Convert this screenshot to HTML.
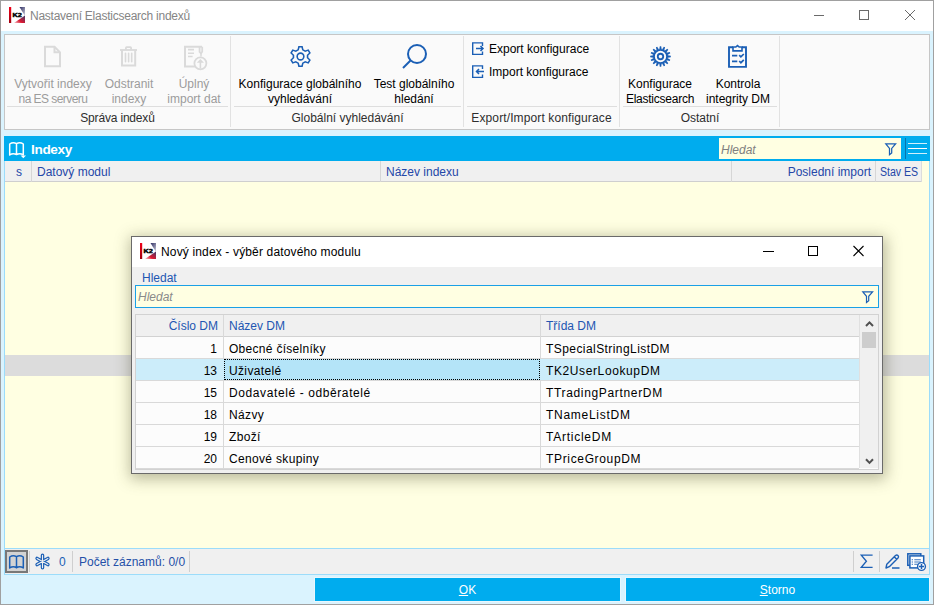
<!DOCTYPE html>
<html><head><meta charset="utf-8">
<style>
*{box-sizing:border-box;margin:0;padding:0}
html,body{width:934px;height:605px;overflow:hidden;background:#fff}
body{font-family:"Liberation Sans",sans-serif;font-size:12px;color:#000;position:relative}
.a{position:absolute}
.t{position:absolute;white-space:nowrap;line-height:15px;margin-top:1px}
.c{text-align:center}
svg{position:absolute;overflow:visible}
#win{position:absolute;left:0;top:0;width:934px;height:605px;background:#daf3fe}
#wb{position:absolute;left:0;top:0;width:934px;height:605px;border:1px solid #a0a0a0;pointer-events:none}
#title{position:absolute;left:0;top:0;width:934px;height:31px;background:#fff}
#ribbon{position:absolute;left:4px;top:34px;width:926px;height:96px;background:#fafafa;border:1px solid #c6c6c6}
.vs{position:absolute;width:1px;top:36px;height:91px;background:#e2e2e2}
.hs{position:absolute;height:1px;top:106px;background:#dedede}
.dis{color:#9c9c9c}
.lab{color:#2e2e2e}
#bar{position:absolute;left:4px;top:136px;width:926px;height:25px;background:#00acee}
#ghead{position:absolute;left:5px;top:161px;width:917px;height:21px;background:#f0f0f0;border-bottom:1px solid #cfcfcf}
#gbody{position:absolute;left:4px;top:161px;width:926px;height:388px;background:#ffffe2;border-left:1px solid #9cdcfa;border-right:1px solid #9cdcfa}
#status{position:absolute;left:4px;top:548px;width:926px;height:27px;background:#f0f0f0;border:1px solid #9cdcfa}
.btn{position:absolute;top:578px;height:23px;background:#00acee;color:#fff;text-align:center;line-height:23px;padding-top:1px;outline:1px solid #e8f7fe}
.btn u{text-underline-offset:1px}
.hd{color:#2447a8}
#dlg{position:absolute;left:131px;top:236px;width:752px;height:238px;background:#f0f0f0;border:1px solid #6a6a6a;box-shadow:1px 3px 14px 2px rgba(70,70,40,0.38)}
.dh{color:#2256b2}
.cell{position:absolute;height:22px;line-height:22px;white-space:nowrap;margin-top:1px}
</style></head><body>
<svg width="0" height="0" style="position:absolute"><defs>
<linearGradient id="kr" x1="0" y1="0" x2="0" y2="1"><stop offset="0" stop-color="#f00018"/><stop offset="1" stop-color="#a0000f"/></linearGradient>
<linearGradient id="kn" x1="0" y1="0" x2="1" y2="1"><stop offset="0" stop-color="#2a2a60"/><stop offset="0.6" stop-color="#8a8aa8"/><stop offset="1" stop-color="#d8d8e8"/></linearGradient>
<linearGradient id="kb" x1="0" y1="1" x2="1" y2="0"><stop offset="0" stop-color="#f4c0c8"/><stop offset="0.4" stop-color="#d8001a"/><stop offset="1" stop-color="#23235a"/></linearGradient>
</defs></svg>
<div id="win">
  <div id="title"></div>
  <div id="ribbon"></div>
  <div id="gbody"></div>
  <div class="a" style="left:5px;top:355px;width:924px;height:21px;background:#dcdcdc"></div>
  <div id="ghead"></div>
  <div id="bar"></div>
  <div id="status"></div>
  <div class="btn" style="left:315px;width:305px"><u>O</u>K</div>
  <div class="btn" style="left:626px;width:303px"><u>S</u>torno</div>
</div>

<!-- title bar -->
<svg style="left:9px;top:7px" width="16" height="16" viewBox="0 0 16 16">
  <rect x="0" y="0" width="16" height="16" fill="#fff"/>
  <rect x="0" y="0" width="2.2" height="16" fill="url(#kr)"/>
  <path d="M10.5 0 L16 0 L16 9 Z" fill="url(#kn)"/>
  <path d="M5 16 L16 8.5 L16 16 Z" fill="url(#kb)" opacity="0.9"/>
  <text x="8.2" y="10.1" font-size="6.2" font-weight="bold" text-anchor="middle" fill="#000" stroke="#000" stroke-width="0.45" font-family="Liberation Sans" textLength="9.4" lengthAdjust="spacingAndGlyphs">K2</text>
</svg>
<div class="t" style="left:30px;top:8px;color:#858585;letter-spacing:-0.25px">Nastavení Elasticsearch indexů</div>
<svg style="left:814px;top:15px" width="10" height="1"><rect width="10" height="1" fill="#6a6a6a"/></svg>
<svg style="left:859px;top:10px" width="10" height="10"><rect x="0.5" y="0.5" width="9" height="9" fill="none" stroke="#6a6a6a" stroke-width="1"/></svg>
<svg style="left:905px;top:10px" width="10" height="10"><path d="M0 0 L10 10 M10 0 L0 10" stroke="#6a6a6a" stroke-width="1"/></svg>

<!-- ribbon separators -->
<div class="vs" style="left:230px"></div>
<div class="vs" style="left:463px"></div>
<div class="vs" style="left:619px"></div>
<div class="vs" style="left:779px"></div>
<div class="hs" style="left:7px;width:221px"></div>
<div class="hs" style="left:234px;width:227px"></div>
<div class="hs" style="left:467px;width:150px"></div>
<div class="hs" style="left:623px;width:154px"></div>

<!-- group 1 -->
<svg style="left:44px;top:46px" width="18" height="22" viewBox="0 0 18 22">
  <path d="M1 0.8 H10.5 L16 6.3 V20.2 H1 Z" fill="none" stroke="#dadada" stroke-width="2"/>
  <path d="M10.5 0.8 V6.3 H16" fill="none" stroke="#dadada" stroke-width="2"/>
</svg>
<svg style="left:119px;top:45px" width="19" height="23" viewBox="0 0 19 23">
  <path d="M1 5 H18" stroke="#dadada" stroke-width="1.8"/>
  <path d="M6.9 4.5 V3 Q6.9 2.2 7.7 2.2 H11.3 Q12.1 2.2 12.1 3 V4.5" fill="none" stroke="#dadada" stroke-width="1.8"/>
  <path d="M3 5 V20.6 H16.2 V5" fill="none" stroke="#dadada" stroke-width="2"/>
  <path d="M6.5 8.3 V16.8 M9.6 8.3 V16.8 M12.7 8.3 V16.8" stroke="#dadada" stroke-width="1.6" stroke-linecap="round"/>
</svg>
<svg style="left:183px;top:45px" width="27" height="26" viewBox="0 0 27 26">
  <path d="M14 21.4 H2 V1.7 H19" fill="none" stroke="#dadada" stroke-width="2"/>
  <path d="M16.6 1.7 V6.8 L18 8.3 L19.2 6.8 V1.7" fill="none" stroke="#dadada" stroke-width="1.8"/>
  <path d="M18 8.3 V11.5" stroke="#dadada" stroke-width="1.5"/>
  <path d="M5 4.6 H11 M5 8.2 H11 M5 11.5 H9.6" stroke="#dadada" stroke-width="1.6"/>
  <circle cx="17.4" cy="18.3" r="6" fill="#fafafa" stroke="#dadada" stroke-width="1.8"/>
  <path d="M17.4 23.6 V16.5" stroke="#dadada" stroke-width="1.6"/>
  <path d="M13.8 17.8 L17.4 14 L21 17.8 Z" fill="#dadada"/>
</svg>
<div class="t c dis" style="left:7px;top:76px;width:92px">Vytvořit indexy<br><span style="letter-spacing:-0.55px">na ES serveru</span></div>
<div class="t c dis" style="left:99px;top:76px;width:60px">Odstranit<br>indexy</div>
<div class="t c dis" style="left:161px;top:76px;width:66px">Úplný<br>import dat</div>
<div class="t c lab" style="left:7px;top:110px;width:221px;letter-spacing:-0.18px">Správa indexů</div>

<!-- group 2 -->
<svg style="left:289px;top:45px" width="23" height="23" viewBox="-0.9 -0.9 24.8 24.8">
  <path d="M9.8 1 H13.2 L14 4.3 L16.6 5.7 L19.8 4.6 L21.6 7.7 L19.1 10.2 V12.8 L21.6 15.3 L19.8 18.4 L16.6 17.3 L14 18.7 L13.2 22 H9.8 L9 18.7 L6.4 17.3 L3.2 18.4 L1.4 15.3 L3.9 12.8 V10.2 L1.4 7.7 L3.2 4.6 L6.4 5.7 L9 4.3 Z" fill="none" stroke="#1b5fb5" stroke-width="1.7" stroke-linejoin="miter"/>
  <circle cx="11.5" cy="11.5" r="3.6" fill="none" stroke="#1b5fb5" stroke-width="1.7"/>
</svg>
<svg style="left:401px;top:43px" width="28" height="27" viewBox="0 0 28 27">
  <circle cx="16" cy="11" r="9" fill="none" stroke="#1b5fb5" stroke-width="2"/>
  <path d="M9.5 17.5 L2 25" stroke="#1b5fb5" stroke-width="2"/>
</svg>
<div class="t c" style="left:233px;top:76px;width:134px">Konfigurace globálního<br>vyhledávání</div>
<div class="t c" style="left:369px;top:76px;width:90px">Test globálního<br>hledání</div>
<div class="t c lab" style="left:234px;top:110px;width:227px">Globální vyhledávání</div>

<!-- group 3 -->
<svg style="left:471px;top:42px" width="14" height="14" viewBox="0 0 14 14">
  <path d="M11.5 4 V0.9 H1.7 V12.4 H11.5 V9.5" fill="none" stroke="#1b5fb5" stroke-width="1.4"/>
  <path d="M5 6.5 H12 M9.5 4 L12 6.5 L9.5 9" fill="none" stroke="#1b5fb5" stroke-width="1.5"/>
</svg>
<svg style="left:471px;top:65px" width="14" height="14" viewBox="0 0 14 14">
  <path d="M11.5 4 V0.9 H1.7 V12.4 H11.5 V9.5" fill="none" stroke="#1b5fb5" stroke-width="1.4"/>
  <path d="M13 6.5 H5.5 M8 4 L5.5 6.5 L8 9" fill="none" stroke="#1b5fb5" stroke-width="1.5"/>
</svg>
<div class="t" style="left:489px;top:41px">Export konfigurace</div>
<div class="t" style="left:489px;top:64px">Import konfigurace</div>
<div class="t c lab" style="left:464px;top:110px;width:155px;letter-spacing:0.12px">Export/Import konfigurace</div>

<!-- group 4 -->
<svg style="left:649px;top:45px" width="23" height="23" viewBox="-11.5 -11.5 23 23">
  <circle cx="0" cy="0" r="6.6" fill="none" stroke="#1b5fb5" stroke-width="1.9"/>
  <circle cx="0" cy="0" r="2.7" fill="none" stroke="#1b5fb5" stroke-width="1.9"/>
  <g fill="#1b5fb5"><path d="M-1.2 -7 L-0.7 -10.3 H0.7 L1.2 -7 Z" transform="rotate(0.0)"/><path d="M-1.2 -7 L-0.7 -10.3 H0.7 L1.2 -7 Z" transform="rotate(22.5)"/><path d="M-1.2 -7 L-0.7 -10.3 H0.7 L1.2 -7 Z" transform="rotate(45.0)"/><path d="M-1.2 -7 L-0.7 -10.3 H0.7 L1.2 -7 Z" transform="rotate(67.5)"/><path d="M-1.2 -7 L-0.7 -10.3 H0.7 L1.2 -7 Z" transform="rotate(90.0)"/><path d="M-1.2 -7 L-0.7 -10.3 H0.7 L1.2 -7 Z" transform="rotate(112.5)"/><path d="M-1.2 -7 L-0.7 -10.3 H0.7 L1.2 -7 Z" transform="rotate(135.0)"/><path d="M-1.2 -7 L-0.7 -10.3 H0.7 L1.2 -7 Z" transform="rotate(157.5)"/><path d="M-1.2 -7 L-0.7 -10.3 H0.7 L1.2 -7 Z" transform="rotate(180.0)"/><path d="M-1.2 -7 L-0.7 -10.3 H0.7 L1.2 -7 Z" transform="rotate(202.5)"/><path d="M-1.2 -7 L-0.7 -10.3 H0.7 L1.2 -7 Z" transform="rotate(225.0)"/><path d="M-1.2 -7 L-0.7 -10.3 H0.7 L1.2 -7 Z" transform="rotate(247.5)"/><path d="M-1.2 -7 L-0.7 -10.3 H0.7 L1.2 -7 Z" transform="rotate(270.0)"/><path d="M-1.2 -7 L-0.7 -10.3 H0.7 L1.2 -7 Z" transform="rotate(292.5)"/><path d="M-1.2 -7 L-0.7 -10.3 H0.7 L1.2 -7 Z" transform="rotate(315.0)"/><path d="M-1.2 -7 L-0.7 -10.3 H0.7 L1.2 -7 Z" transform="rotate(337.5)"/></g>
</svg>
<svg style="left:727px;top:44px" width="21" height="25" viewBox="0 0 21 25">
  <path d="M6 3.2 H2 V22.9 H19 V3.2 H15" fill="none" stroke="#1b5fb5" stroke-width="1.9"/>
  <path d="M6 3 V6.9 H15 V3 H12.2 L10.5 1.6 L8.8 3 Z" fill="none" stroke="#1b5fb5" stroke-width="1.6"/>
  <path d="M5 11.6 H10.3 M5 17.4 H10.3" stroke="#1b5fb5" stroke-width="1.9"/>
  <path d="M12.2 11.2 L13.9 12.9 L16.8 10 M12.2 17 L13.9 18.7 L16.8 15.8" fill="none" stroke="#1b5fb5" stroke-width="1.7"/>
</svg>
<div class="t c" style="left:623px;top:76px;width:74px">Konfigurace<br><span style="letter-spacing:-0.25px">Elasticsearch</span></div>
<div class="t c" style="left:699px;top:76px;width:78px">Kontrola<br>integrity DM</div>
<div class="t c lab" style="left:623px;top:110px;width:154px">Ostatní</div>

<!-- Indexy bar -->
<svg style="left:8px;top:141px" width="18" height="18" viewBox="0 0 18 18">
  <path d="M1.7 3 Q5 0.6 8.5 2.6 Q12 0.6 15.3 3 V14 Q12 11.6 8.5 13.6 Q5 11.6 1.7 14 Z M8.5 2.6 V14" fill="none" stroke="#fff" stroke-width="1.5" stroke-linejoin="round"/>
  <path d="M12.6 14.4 H18 L15.3 17.2 Z" fill="#fff"/>
</svg>
<div class="t" style="left:31px;top:141px;color:#fff;font-weight:bold;font-size:13.6px;letter-spacing:-0.35px">Indexy</div>
<div class="a" style="left:719px;top:138px;width:182px;height:21px;background:#ffffe2"></div>
<div class="t" style="left:721px;top:142px;color:#808080;font-style:italic">Hledat</div>
<svg style="left:885px;top:143px" width="12" height="13" viewBox="0 0 12 13">
  <path d="M0.8 0.8 H10.6 L6.7 5.4 V9.9 L4.5 11.7 V5.4 Z" fill="none" stroke="#1b5fb5" stroke-width="1.25" stroke-linejoin="miter"/>
</svg>
<div class="a" style="left:905px;top:138px;width:1px;height:21px;background:#0874ad"></div>
<div class="a" style="left:908px;top:143px;width:19px;height:1.4px;background:#d2f0fc"></div>
<div class="a" style="left:908px;top:148px;width:19px;height:1.4px;background:#fff"></div>
<div class="a" style="left:908px;top:153px;width:19px;height:1.4px;background:#d2f0fc"></div>

<!-- grid header -->
<div class="a" style="left:31px;top:161px;width:1px;height:21px;background:#d6d6d6"></div>
<div class="a" style="left:380px;top:161px;width:1px;height:21px;background:#d6d6d6"></div>
<div class="a" style="left:731px;top:161px;width:1px;height:21px;background:#d6d6d6"></div>
<div class="a" style="left:875px;top:161px;width:1px;height:21px;background:#d6d6d6"></div>
<div class="a" style="left:921px;top:161px;width:1px;height:21px;background:#dcdcdc"></div>
<div class="t hd" style="left:16px;top:164px">s</div>
<div class="t hd" style="left:37px;top:164px">Datový modul</div>
<div class="t hd" style="left:386px;top:164px">Název indexu</div>
<div class="t hd" style="left:731px;top:164px;width:140px;text-align:right">Poslední import</div>
<div class="t hd" style="left:880px;top:164px;display:inline-block;transform:scaleX(0.88);transform-origin:0 0">Stav ES</div>

<!-- status bar -->
<div class="a" style="left:5px;top:550px;width:23px;height:23px;background:#d3d3d3;border:2px solid #787878"></div>
<svg style="left:8px;top:554px" width="18" height="16" viewBox="0 0 18 16">
  <path d="M1.7 3 Q5 0.6 8.5 2.6 Q12 0.6 15.3 3 V14 Q12 11.6 8.5 13.6 Q5 11.6 1.7 14 Z M8.5 2.6 V14.6" fill="none" stroke="#1b5fb5" stroke-width="1.5" stroke-linejoin="round"/>
</svg>
<div class="a" style="left:29px;top:551px;width:1px;height:21px;background:#cfcfcf"></div>
<svg style="left:34px;top:553px" width="17" height="17" viewBox="0 0 17 17">
  <g transform="translate(8.5 8.5)">
  <path d="M0 -6.2 V6.2 M-5.4 -3.1 L5.4 3.1 M-5.4 3.1 L5.4 -3.1" stroke="#1b5fb5" stroke-width="3.5" stroke-linecap="round"/>
  <path d="M0 -6.2 V6.2 M-5.4 -3.1 L5.4 3.1 M-5.4 3.1 L5.4 -3.1" stroke="#f0f0f0" stroke-width="1.1" stroke-linecap="round"/>
  </g>
</svg>
<div class="t" style="left:59px;top:554px;color:#1b5fb5">0</div>
<div class="a" style="left:72px;top:551px;width:1px;height:21px;background:#cfcfcf"></div>
<div class="t" style="left:79px;top:554px;color:#2550a8">Počet záznamů: 0/0</div>
<div class="a" style="left:189px;top:551px;width:1px;height:21px;background:#cfcfcf"></div>
<div class="a" style="left:853px;top:551px;width:1px;height:21px;background:#cfcfcf"></div>
<svg style="left:859px;top:554px" width="15" height="15" viewBox="0 0 15 15">
  <path d="M13.6 1.1 H2.3 L7.4 7.2 L2.3 13.3 H13.6" fill="none" stroke="#1b5fb5" stroke-width="1.35"/>
</svg>
<div class="a" style="left:879px;top:551px;width:1px;height:21px;background:#cfcfcf"></div>
<svg style="left:885px;top:554px" width="16" height="15" viewBox="0 0 16 15">
  <path d="M1 14 L1.8 10.2 L10.5 1.5 Q11.8 0.4 13 1.5 Q14.1 2.7 13 4 L4.3 12.7 Z M9.2 2.8 L11.7 5.3" fill="none" stroke="#1b5fb5" stroke-width="1.4" stroke-linejoin="round"/>
  <path d="M7 14 H14.5" stroke="#1b5fb5" stroke-width="1.5"/>
</svg>
<svg style="left:907px;top:553px" width="20" height="18" viewBox="0 0 20 18">
  <rect x="0.8" y="0.8" width="13" height="11.5" fill="none" stroke="#1b5fb5" stroke-width="1.5"/>
  <rect x="2.9" y="2.9" width="13.8" height="12" fill="#fff" stroke="#1b5fb5" stroke-width="1.5"/>
  <path d="M5.3 6.3 V7.3 M5.3 8.5 V9.5 M5.3 10.7 V11.7" stroke="#1b5fb5" stroke-width="1.2"/>
  <path d="M7.3 6.8 H13.8 M7.3 9 H13.8 M7.3 11.2 H11" stroke="#1b5fb5" stroke-width="1.1" opacity="0.85"/>
  <circle cx="14.5" cy="13.5" r="3.9" fill="#fff" stroke="#1b5fb5" stroke-width="1.4"/>
  <path d="M14.5 11 V16 M12 13.5 H17" stroke="#1b5fb5" stroke-width="1.5"/>
</svg>

<!-- dialog -->
<div id="dlg">
  <div class="a" style="left:0;top:0;width:750px;height:30px;background:#fff"></div>
</div>
<svg style="left:140px;top:243px" width="16" height="16" viewBox="0 0 16 16">
  <rect x="0" y="0" width="16" height="16" fill="#fff"/>
  <rect x="0" y="0" width="2.2" height="16" fill="url(#kr)"/>
  <path d="M10.5 0 L16 0 L16 9 Z" fill="url(#kn)"/>
  <path d="M5 16 L16 8.5 L16 16 Z" fill="url(#kb)" opacity="0.9"/>
  <text x="8.2" y="10.1" font-size="6.2" font-weight="bold" text-anchor="middle" fill="#000" stroke="#000" stroke-width="0.45" font-family="Liberation Sans" textLength="9.4" lengthAdjust="spacingAndGlyphs">K2</text>
</svg>
<div class="t" style="left:161px;top:244px;letter-spacing:0.15px">Nový index - výběr datového modulu</div>
<svg style="left:763px;top:251px" width="11" height="1"><rect width="11" height="1" fill="#000"/></svg>
<svg style="left:808px;top:246px" width="10" height="10"><rect x="0.5" y="0.5" width="9" height="9" fill="none" stroke="#000" stroke-width="1"/></svg>
<svg style="left:853px;top:246px" width="11" height="10"><path d="M0.5 0 L10.5 10 M10.5 0 L0.5 10" stroke="#000" stroke-width="1.1"/></svg>
<div class="t dh" style="left:142px;top:270px">Hledat</div>
<div class="a" style="left:135px;top:285px;width:744px;height:23px;background:#ffffe2;border:1px solid #1aa0e6"></div>
<div class="t" style="left:138px;top:289px;color:#8a8a8a;font-style:italic">Hledat</div>
<svg style="left:862px;top:291px" width="12" height="12" viewBox="0 0 12 12">
  <path d="M0.8 0.8 H10.6 L6.7 5.3 V9.6 L4.5 11.4 V5.3 Z" fill="none" stroke="#1b5fb5" stroke-width="1.2"/>
</svg>
<!-- dialog grid -->
<div class="a" style="left:135px;top:314px;width:744px;height:156px;background:#fcfcfc;border:1px solid #d2d2d2"></div>
<div class="a" style="left:136px;top:315px;width:723px;height:22px;background:#f0f0f0;border-bottom:1px solid #d2d2d2"></div>
<div class="a" style="left:859px;top:315px;width:19px;height:153px;background:#f0f0f0;border-left:1px solid #e0e0e0"></div>
<div class="a" style="left:862px;top:332px;width:14px;height:16px;background:#cdcdcd"></div>
<svg style="left:865px;top:321px" width="9" height="7"><path d="M1 5 L4.5 1.4 L8 5" fill="none" stroke="#505050" stroke-width="2"/></svg>
<svg style="left:865px;top:458px" width="9" height="7"><path d="M1 1.2 L4.5 4.9 L8 1.2" fill="none" stroke="#505050" stroke-width="2"/></svg>
<div class="cell dh" style="left:136px;top:315px;width:82px;text-align:right;height:21px;line-height:21px">Číslo DM</div>
<div class="cell dh" style="left:229px;top:315px;height:21px;line-height:21px">Název DM</div>
<div class="cell dh" style="left:546px;top:315px;height:21px;line-height:21px">Třída DM</div>
<div class="a" style="left:223px;top:315px;width:1px;height:153px;background:#d9d9d9"></div>
<div class="a" style="left:540px;top:315px;width:1px;height:153px;background:#d9d9d9"></div>
<div class="a" style="left:136px;top:358px;width:723px;height:1px;background:#d9d9d9"></div>
<div class="cell" style="left:136px;top:337px;width:81px;text-align:right">1</div>
<div class="cell" style="left:229px;top:337px;letter-spacing:0.29px">Obecné číselníky</div>
<div class="cell" style="left:546px;top:337px;letter-spacing:0.43px">TSpecialStringListDM</div>
<div class="a" style="left:136px;top:359px;width:723px;height:21px;background:#ccedfa"></div>
<div class="a" style="left:224px;top:359px;width:316px;height:21px;background:#b4e4f8;border:1px dotted #000"></div>
<div class="a" style="left:136px;top:380px;width:723px;height:1px;background:#d9d9d9"></div>
<div class="cell" style="left:136px;top:359px;width:81px;text-align:right">13</div>
<div class="cell" style="left:229px;top:359px;letter-spacing:0.35px">Uživatelé</div>
<div class="cell" style="left:546px;top:359px;letter-spacing:0.61px">TK2UserLookupDM</div>
<div class="a" style="left:136px;top:402px;width:723px;height:1px;background:#d9d9d9"></div>
<div class="cell" style="left:136px;top:381px;width:81px;text-align:right">15</div>
<div class="cell" style="left:229px;top:381px;letter-spacing:0.6px">Dodavatelé - odběratelé</div>
<div class="cell" style="left:546px;top:381px;letter-spacing:0.66px">TTradingPartnerDM</div>
<div class="a" style="left:136px;top:424px;width:723px;height:1px;background:#d9d9d9"></div>
<div class="cell" style="left:136px;top:403px;width:81px;text-align:right">18</div>
<div class="cell" style="left:229px;top:403px;letter-spacing:0.35px">Názvy</div>
<div class="cell" style="left:546px;top:403px;letter-spacing:0.72px">TNameListDM</div>
<div class="a" style="left:136px;top:446px;width:723px;height:1px;background:#d9d9d9"></div>
<div class="cell" style="left:136px;top:425px;width:81px;text-align:right">19</div>
<div class="cell" style="left:229px;top:425px;letter-spacing:0.35px">Zboží</div>
<div class="cell" style="left:546px;top:425px;letter-spacing:0.75px">TArticleDM</div>
<div class="a" style="left:136px;top:468px;width:723px;height:1px;background:#d9d9d9"></div>
<div class="cell" style="left:136px;top:447px;width:81px;text-align:right">20</div>
<div class="cell" style="left:229px;top:447px;letter-spacing:0.33px">Cenové skupiny</div>
<div class="cell" style="left:546px;top:447px;letter-spacing:0.66px">TPriceGroupDM</div>
<div id="wb"></div>
</body></html>
